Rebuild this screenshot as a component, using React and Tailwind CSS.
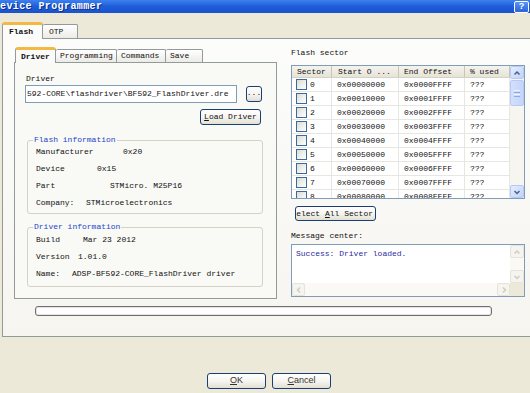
import React from "react";

function Chevron({ dir, color = "#4D6185", size = 8 }) {
  const paths = {
    up: "M1.5 5.5 L4 3 L6.5 5.5",
    down: "M1.5 3 L4 5.5 L6.5 3",
    left: "M5 1.5 L2.5 4 L5 6.5",
    right: "M3 1.5 L5.5 4 L3 6.5",
  };
  return (
    <svg width={size} height={size} viewBox="0 0 8 8">
      <path d={paths[dir]} fill="none" stroke={color} strokeWidth="1.5" />
    </svg>
  );
}

function ScrollBtn({ dir, disabled, className = "" }) {
  return (
    <div
      className={
        disabled
          ? `flex items-center justify-center rounded-[2px] border border-[#E6E4DA] bg-[#F5F4EE] ${className}`
          : `flex items-center justify-center rounded-[2px] border border-[#B7CAF5] bg-gradient-to-br from-[#E6EEFF] to-[#BFD2FA] ${className}`
      }
    >
      <Chevron dir={dir} color={disabled ? "#CFCDC2" : "#4D6185"} />
    </div>
  );
}

function Btn({ className = "", children }) {
  return (
    <div
      className={`flex items-center rounded-[3px] border border-[#1B3E73] bg-gradient-to-b from-white via-[#F6F5F0] to-[#E2E0D4] ${className}`}
    >
      {children}
    </div>
  );
}

function Checkbox() {
  return (
    <div className="h-[11px] w-[11px] shrink-0 border border-[#3C6A9A] bg-gradient-to-br from-[#DCDCD5] to-white" />
  );
}

function Group({ title, className = "", children }) {
  return (
    <div
      className={`relative rounded-[3px] border border-[#D3D2C4] ${className}`}
    >
      <span className="absolute -top-[6px] left-[5px] bg-[#F9F9F6] px-px leading-[10px] text-[#1B45C8]">
        {title}
      </span>
      {children}
    </div>
  );
}

function InfoRow({ label, w, value, h = "h-[17px]" }) {
  return (
    <div className={`flex items-center ${h}`}>
      <span className="shrink-0 whitespace-pre" style={{ width: w }}>
        {label}
      </span>
      <span className="whitespace-pre">{value}</span>
    </div>
  );
}

export default function App() {
  const rows = [0, 1, 2, 3, 4, 5, 6, 7, 8];
  return (
    <div className="relative h-[393px] w-[530px] overflow-hidden bg-[#ECE9D8] font-['Liberation_Mono','DejaVu_Sans_Mono',monospace] text-[8px] text-[#111]">
      {/* Title bar */}
      <div className="flex h-[13px] items-center justify-between bg-gradient-to-b from-[#3D80F0] via-[#1F5DD8] to-[#1A52CC]">
        <span className="text-[10px] font-bold leading-none tracking-[0.4px] text-white [text-shadow:1px_1px_0_#0B2F8A]">
          evice Programmer
        </span>
        <div className="mr-[1px] flex h-[12px] w-[15px] items-center justify-center rounded-[2px] border border-white bg-gradient-to-b from-[#5A94F6] to-[#2A62DB] font-['Liberation_Sans',sans-serif] text-[9px] font-bold leading-none text-white">
          ?
        </div>
      </div>

      {/* Outer tabs */}
      <div className="mt-[9px] flex h-[16px] items-end pl-[2px]">
        <div className="relative z-10 -mb-px flex h-[17px] w-[41px] items-center rounded-t-[3px] border-x border-t-[3px] border-x-[#919B9C] border-t-[#F4B844] bg-[#FCFCFB] pl-[6px] font-semibold">
          Flash
        </div>
        <div className="flex h-[14px] w-[35px] items-center rounded-t-[2px] border-r border-t border-[#919B9C] bg-gradient-to-b from-white to-[#ECEBE6] pl-[6px]">
          OTP
        </div>
      </div>

      {/* Outer panel */}
      <div className="ml-[2px] h-[299px] w-[540px] border border-[#919B9C] bg-gradient-to-b from-[#FCFCFB] to-[#F6F5F0]">
        <div className="flex items-start">
          {/* Left column */}
          <div className="ml-[11px] mt-[8px] w-[263px]">
            <div className="flex h-[15px] items-end pl-[1px]">
              <div className="relative z-10 -mb-px flex h-[16px] w-[41px] items-center rounded-t-[3px] border-x border-t-[3px] border-x-[#919B9C] border-t-[#F4B844] bg-[#FAFAF8] pl-[5px] font-semibold">
                Driver
              </div>
              <div className="flex h-[13px] w-[61px] items-center rounded-t-[2px] border-r border-t border-[#919B9C] bg-gradient-to-b from-white to-[#ECEBE6] pl-[4px]">
                Programming
              </div>
              <div className="flex h-[13px] w-[49px] items-center rounded-t-[2px] border-r border-t border-[#919B9C] bg-gradient-to-b from-white to-[#ECEBE6] pl-[4px]">
                Commands
              </div>
              <div className="flex h-[13px] w-[37px] items-center rounded-t-[2px] border-r border-t border-[#919B9C] bg-gradient-to-b from-white to-[#ECEBE6] pl-[4px]">
                Save
              </div>
            </div>
            <div className="h-[237px] w-[263px] border border-[#919B9C] bg-[#F9F9F6]">
              <div className="ml-[11px] mt-[11px] leading-[10px]">Driver</div>
              <div className="mt-[1px] flex items-start">
                <div className="ml-[10px] flex h-[18px] w-[212px] items-center overflow-hidden whitespace-nowrap border border-[#7F9DB9] bg-white pl-[1px]">
                  592-CORE\flashdriver\BF592_FlashDriver.dre
                </div>
                <Btn className="ml-[9px] mt-[1px] h-[16px] w-[16px] justify-center">
                  <span className="-mt-[3px]">...</span>
                </Btn>
              </div>
              <Btn className="ml-[185px] mt-[6px] h-[16px] w-[61px] justify-center">
                <span>
                  <span className="underline">L</span>oad Driver
                </span>
              </Btn>

              <Group title="Flash information" className="ml-[12px] mt-[15px] h-[74px] w-[236px]">
                <div className="pl-[8px] pt-[2px]">
                  <InfoRow label="Manufacturer" w={87} value="0x20" />
                  <InfoRow label="Device" w={61} value="0x15" />
                  <InfoRow label="Part" w={74} value="STMicro. M25P16" />
                  <InfoRow label="Company:" w={50} value="STMicroelectronics" />
                </div>
              </Group>

              <Group title="Driver information" className="ml-[12px] mt-[13px] h-[60px] w-[236px]">
                <div className="pl-[8px] pt-[3px]">
                  <InfoRow label="Build" w={47} value="Mar 23 2012" />
                  <InfoRow label="Version" w={42} value="1.01.0" />
                  <InfoRow label="Name:" w={36} value="ADSP-BF592-CORE_FlashDriver driver" />
                </div>
              </Group>
            </div>
          </div>

          {/* Right column */}
          <div className="ml-[14px] mt-[9px] w-[234px]">
            <div className="leading-[10px]">Flash sector</div>
            <div className="mt-[7px] flex h-[134px] w-[234px] border border-[#7F9DB9] bg-white">
              <div className="w-[218px] overflow-hidden">
                <div className="flex h-[12px] border-b border-[#D6D2C2] bg-gradient-to-b from-[#F4F3EE] to-[#E6E4D8]">
                  <div className="flex w-[40px] items-center border-r border-[#C9C6B6] pl-[5px]">Sector</div>
                  <div className="flex w-[67px] items-center border-r border-[#C9C6B6] pl-[6px]">Start O ...</div>
                  <div className="flex w-[66px] items-center border-r border-[#C9C6B6] pl-[5px]">End Offset</div>
                  <div className="flex w-[45px] items-center border-r border-[#C9C6B6] pl-[5px]">% used</div>
                </div>
                {rows.map((i) => (
                  <div key={i} className="flex h-[14px] border-b border-[#E6E6E2]">
                    <div className="flex w-[40px] items-center gap-[3px] border-r border-[#E6E6E2] pl-[4px]">
                      <Checkbox />
                      <span>{i}</span>
                    </div>
                    <div className="flex w-[67px] items-center border-r border-[#E6E6E2] pl-[5px]">
                      {`0x000${i}0000`}
                    </div>
                    <div className="flex w-[66px] items-center border-r border-[#E6E6E2] pl-[5px]">
                      {`0x000${i}FFFF`}
                    </div>
                    <div className="flex w-[45px] items-center border-r border-[#E6E6E2] pl-[5px]">
                      ???
                    </div>
                  </div>
                ))}
              </div>
              <div className="flex w-[14px] flex-col bg-[#F6F5EF]">
                <ScrollBtn dir="up" className="h-[13px]" />
                <div className="mt-px flex h-[26px] flex-col items-center justify-center gap-px rounded-[2px] border border-[#B7CAF5] bg-gradient-to-r from-[#D3E0FD] to-[#C4D5FB]">
                  <div className="h-px w-[6px] bg-[#EEF3FF]" />
                  <div className="h-px w-[6px] bg-[#8CA8E8]" />
                  <div className="h-px w-[6px] bg-[#EEF3FF]" />
                  <div className="h-px w-[6px] bg-[#8CA8E8]" />
                </div>
                <div className="flex-1" />
                <ScrollBtn dir="down" className="h-[13px]" />
              </div>
            </div>

            <Btn className="ml-[4px] mt-[7px] h-[15px] w-[81px] justify-end overflow-hidden whitespace-nowrap pr-[2px]">
              <span>
                Select <span className="underline">A</span>ll Sector
              </span>
            </Btn>

            <div className="mt-[10px] leading-[10px]">Message center:</div>
            <div className="mt-[3px] flex h-[53px] w-[234px] flex-col border border-[#7F9DB9] bg-white">
              <div className="flex flex-1">
                <div className="flex-1 pl-[4px] pt-[3px] text-[#2A2C9E]">Success: Driver loaded.</div>
                <div className="flex w-[14px] flex-col justify-between bg-[#FAF9F5]">
                  <ScrollBtn dir="up" disabled className="h-[13px]" />
                  <ScrollBtn dir="down" disabled className="h-[13px]" />
                </div>
              </div>
              <div className="flex h-[13px] bg-[#FAF9F5]">
                <ScrollBtn dir="left" disabled className="w-[13px]" />
                <div className="flex-1" />
                <ScrollBtn dir="right" disabled className="w-[13px]" />
                <div className="w-[14px] bg-[#ECE9D8]" />
              </div>
            </div>
          </div>
        </div>

        {/* Progress bar */}
        <div className="ml-[32px] mt-[7px] h-[10px] w-[457px] rounded-[3px] border border-[#6F6F6F] bg-white shadow-[inset_0_0_0_1px_#E4E4E4]" />
      </div>

      {/* Bottom buttons */}
      <div className="mt-[36px] flex gap-[6px] pl-[207px] font-['Liberation_Sans',sans-serif] text-[9px] text-[#333]">
        <Btn className="h-[16px] w-[59px] justify-center">
          <span>
            <span className="underline">O</span>K
          </span>
        </Btn>
        <Btn className="h-[16px] w-[59px] justify-center">
          <span>
            <span className="underline">C</span>ancel
          </span>
        </Btn>
      </div>
    </div>
  );
}
